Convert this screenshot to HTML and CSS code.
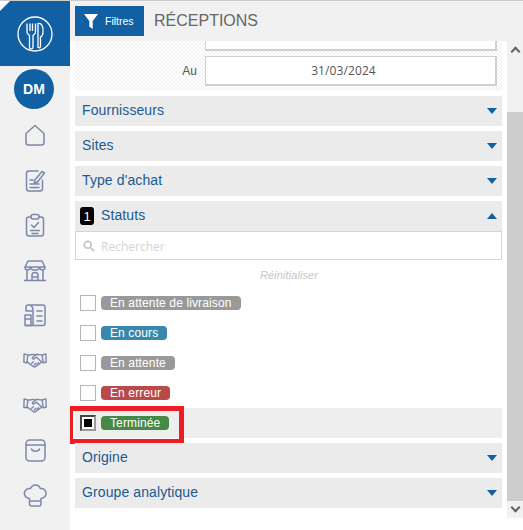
FILE: index.html
```html
<!DOCTYPE html>
<html lang="fr">
<head>
<meta charset="utf-8">
<title>Réceptions</title>
<link rel="stylesheet" href="styles.css">
</head>
<body>
<svg class="defs" aria-hidden="true">
  <symbol id="shake" viewBox="0 0 22 14">
    <g fill="none" stroke="currentColor" stroke-width="1.3" stroke-linejoin="round" stroke-linecap="round">
      <path d="M1 1.5l3.5.8-1 7.2L.8 9z"/>
      <path d="M21 1.5l-3.5.8 1 7.2 2.7-.5z"/>
      <path d="M4.5 2.5c2 .2 3.5-.8 5-.6l2 .6 1.5-.8c1.500.2 3 .8 4.500.7"/>
      <path d="M11.500 2.200L8.700 4.800c-.5 1 .8 1.600 1.700 1l2-1.400 5 4.600"/>
      <path d="M3.700 8.700l5.300 4c1 .8 2 .8 2.800.2l5-3.600"/>
      <path d="M8 10l1.500-1.500M10.300 11.500l1.500-1.500M13 11l1.300-1.500"/>
    </g>
  </symbol>
</svg>
<div class="app">
  <nav class="sidebar">
    <a class="logo">
      <svg class="logo-icon" viewBox="0 0 36 36" fill="none" stroke="#fff" stroke-width="1.300">
        <circle cx="18" cy="18" r="17"/>
        <path d="M10 7.500v8.500c0 2 1.500 2.500 2.500 3.500V31c0 2.500 3.500 2.500 3.500 0V19.500c1-1 2.500-1.500 2.500-3.500V7.500"/>
        <path d="M13 7.500V15M15.500 7.500V15"/>
        <path d="M21 32V7.500c3.500-1 5.500 3 5 9-.2 2.500-1 4-2.500 4.500V30c0 2.500-2.500 2.500-2.500 0"/>
      </svg>
    </a>
    <div class="avatar">DM</div>
    <ul class="nav-list">
      <li class="nav-item">
        <svg class="ico" viewBox="0 0 24 24"><path d="M3 10.500L12 2.500l9 8v9c0 1.500-1 2.500-2.500 2.500h-13C4 22 3 21 3 19.500z"/></svg>
      </li>
      <li class="nav-item">
        <svg class="ico" viewBox="0 0 24 24"><path d="M15 3H6c-1.500 0-2.500 1-2.500 2.500v15C3.500 22 4.500 23 6 23h11c1.500 0 2.500-1 2.500-2.500V12"/><path d="M11.500 12.500L19 3.500l2.500 1.500-7 9-3 .8zM7 12h3M7 16h9M7 19.500h9"/></svg>
      </li>
      <li class="nav-item">
        <svg class="ico" viewBox="0 0 24 24"><path d="M8 4H6C4.500 4 3.500 5 3.500 6.500v14C3.500 22 4.500 23 6 23h12c1.500 0 2.500-1 2.500-2.500v-14C20.500 5 19.500 4 18 4h-2"/><rect x="8" y="1.500" width="8" height="4.500" rx="2"/><path d="M8.500 12l2.500 2.500 4.500-5M7.500 17.500h9M9 20.500h6"/></svg>
      </li>
      <li class="nav-item">
        <svg class="ico" viewBox="0 0 24 24"><path d="M5 3h14l3 6c0 2-1 3-2.500 3S17 11 16.500 9.500C16 11 15 12 13.500 12h-3C9 12 8 11 7.500 9.500 7 11 6 12 4.500 12S2 11 2 9zM2 9h20M4 12v10M20 12v10M1.500 22.500h21"/><path d="M9 22v-5c0-3.500 6-3.500 6 0v5M9 19h6"/></svg>
      </li>
      <li class="nav-item">
        <svg class="ico" viewBox="0 0 24 24"><path d="M3 8V4c0-1.500 1-2 2-2h15c1 0 2 .7 2 2v16c0 1.500-1 2.500-2 2.500H3M3 8h6M6 8v0"/><path d="M8 3c2 .5 2 3.500 2 5v14"/><path d="M2 12h6v10.500H2zM2 16h6M14 8h5M14 13h5M14 18h5"/></svg>
      </li>
      <li class="nav-item">
        <svg class="ico-wide"><use href="#shake"/></svg>
      </li>
      <li class="nav-item">
        <svg class="ico-wide"><use href="#shake"/></svg>
      </li>
      <li class="nav-item">
        <svg class="ico" viewBox="0 0 24 24"><rect x="3" y="2" width="19" height="21" rx="3.500"/><path d="M3 7h19M8.500 11c1 3 7 3 8 0"/></svg>
      </li>
      <li class="nav-item">
        <svg class="ico" viewBox="0 0 24 24"><path d="M6.500 15.500C3 15 1 12.500 1.500 9.500 2 7 4.500 5 7.500 5.500 8.500 3 10.500 2 12.500 2s4 1.200 4.800 3.500c3-.5 5.200 1.500 5.700 4 .5 3-1.500 5.500-5 6V21c0 1-1 2-2 2H9c-1.500 0-2.500-1-2.500-2zM6.500 18h11"/></svg>
      </li>
      <li class="nav-item nav-item-cut">
        <svg class="ico" viewBox="0 0 24 24"><circle cx="12" cy="12" r="9"/></svg>
      </li>
    </ul>
  </nav>

  <main class="main">
    <header class="topbar">
      <button class="filter-btn">
        <svg class="funnel" viewBox="0 0 14 15"><path d="M0 0h14L8.700 7v8L5.300 12.500V7z"/></svg>
        <span>Filtres</span>
      </button>
      <h1 class="title">RÉCEPTIONS</h1>
    </header>

    <div class="body">
      <div class="panel">
        <div class="dates">
          <div class="date-row">
            <span class="date-label">Du</span>
            <div class="date-input">01/01/2024</div>
          </div>
          <div class="date-row">
            <span class="date-label">Au</span>
            <div class="date-input">31/03/2024</div>
          </div>
        </div>

        <section class="acc"><span class="acc-label">Fournisseurs</span><i class="caret"></i></section>
        <section class="acc"><span class="acc-label">Sites</span><i class="caret"></i></section>
        <section class="acc"><span class="acc-label">Type d'achat</span><i class="caret"></i></section>
        <section class="acc acc-open">
          <span class="count">1</span>
          <span class="acc-label">Statuts</span>
          <i class="caret caret-up"></i>
        </section>

        <div class="search">
          <svg class="search-ico" viewBox="0 0 14 14"><circle cx="5.500" cy="5.500" r="4"/><path d="M8.500 8.500L13 13"/></svg>
          <span>Rechercher</span>
        </div>
        <div class="reset">Réinitialiser</div>

        <ul class="statuses">
          <li class="status"><span class="check"></span><span class="tag tag-grey">En attente de livraison</span></li>
          <li class="status"><span class="check"></span><span class="tag tag-blue">En cours</span></li>
          <li class="status"><span class="check"></span><span class="tag tag-grey">En attente</span></li>
          <li class="status"><span class="check"></span><span class="tag tag-red">En erreur</span></li>
          <li class="status status-on"><span class="check check-on"></span><span class="tag tag-green">Terminée</span><span class="highlight"></span></li>
        </ul>

        <section class="acc acc-after"><span class="acc-label">Origine</span><i class="caret"></i></section>
        <section class="acc"><span class="acc-label">Groupe analytique</span><i class="caret"></i></section>
      </div>

      <div class="scrollbar">
        <div class="track-top"><i class="chev chev-up"></i></div>
        <div class="thumb"></div>
        <div class="track-end"><i class="chev chev-down"></i></div>
      </div>
    </div>
  </main>
</div>
</body>
</html>
```
FILE: styles.css
```css
* { box-sizing: border-box; }
html, body { margin: 0; padding: 0; height: 100%; overflow: hidden; background: #fff; }
body { font-family: "Liberation Sans", Arial, sans-serif; font-size: 14px; color: #333; }
.defs { width: 0; height: 0; position: absolute; }
ul { list-style: none; margin: 0; padding: 0; }

.app { display: flex; height: 530px; border-top: 1px solid #cdcdcd; }

/* Sidebar */
.sidebar { width: 70px; flex: none; background: #f1f1f1; display: flex; flex-direction: column; align-items: center; overflow: hidden; }
.logo { position: relative; width: 70px; height: 65px; flex: none; background: #1260a4; display: flex; align-items: center; justify-content: center; }
.logo::before { content: ""; position: absolute; left: 0; top: 0; border-style: solid; border-width: 10px 10px 0 0; border-color: #fff transparent transparent transparent; }
.logo-icon { width: 36px; height: 36px; }
.avatar { width: 40px; height: 40px; border-radius: 50%; background: #1260a4; color: #fff; font-weight: 700; font-size: 14px; display: flex; align-items: center; justify-content: center; margin: 3px 2px 0 0; flex: none; }
.nav-list { display: flex; flex-direction: column; align-items: center; margin: 3px 1px 0 0; }
.nav-item { height: 45px; width: 69px; display: flex; align-items: center; justify-content: center; color: #7d87ab; }
.nav-item-cut { color: #ccc; }
.ico { width: 24px; height: 24px; fill: none; stroke: currentColor; stroke-width: 1.500; stroke-linejoin: round; stroke-linecap: round; }
.ico-wide { width: 24px; height: 16px; color: #7d87ab; }

/* Main */
.main { flex: 1; min-width: 0; display: flex; flex-direction: column; }
.topbar { height: 40px; flex: none; background: #f1f1f1; display: flex; align-items: flex-start; padding: 5px 0 0 5px; }
.filter-btn { width: 69px; height: 30px; border: 0; padding: 0 0 0 9px; background: #1260a4; color: #fff; display: flex; align-items: center; gap: 7px; font: 10.500px "Liberation Sans", Arial, sans-serif; }
.funnel { width: 14px; height: 15px; fill: #fff; }
.title { margin: 0 0 0 10px; font-size: 16px; line-height: 30px; font-weight: 400; color: #666; }

.body { flex: 1; min-height: 0; display: flex; }
.panel { width: 437px; padding-left: 5px; flex: none; overflow: hidden; }

.dates { height: 50px; width: 427px; padding-right: 5px; margin-bottom: 5px; display: flex; flex-direction: column; justify-content: flex-end; gap: 5px; overflow: hidden; background-color: #fff; background-image: repeating-conic-gradient(#f3f3f3 0 25%, #fff 0 50%); background-size: 4px 4px; }
.date-row { flex: none; display: flex; align-items: center; }
.date-row:last-child { margin-bottom: 5px; }
.date-label { width: 130px; padding-right: 8px; text-align: right; font-size: 12px; color: #555; }
.date-input { flex: 1; height: 30px; background: #fff; border: 1px solid #cfcfcf; border-width: 1px 2px 2px 1px; display: flex; align-items: center; justify-content: center; padding-right: 14px; font-family: "Open Sans", sans-serif; font-size: 12px; letter-spacing: .1px; color: #555; }

.acc { position: relative; width: 427px; height: 30px; background: #ebebeb; margin-bottom: 5px; display: flex; align-items: center; padding: 0 0 2px 7px; }
.acc-label { color: #1b5a93; font-size: 14px; letter-spacing: .1px; }
.acc-open { margin-bottom: 0; }
.count { width: 14px; height: 18px; border-radius: 3px; background: #000; color: #fff; font-size: 13px; display: flex; align-items: center; justify-content: center; margin: 2px 7px 0 -2px; }
.caret { position: absolute; right: 5px; top: 12px; width: 0; height: 0; border-style: solid; border-width: 6px 5px 0 5px; border-color: #1260a4 transparent transparent transparent; }
.caret-up { border-width: 0 5px 6px 5px; border-color: transparent transparent #1260a4 transparent; }

.search { width: 427px; height: 29px; background: #fff; border: 1px solid #d5d5d5; display: flex; align-items: center; padding: 1px 0 0 7px; gap: 6px; color: #d4d4d4; font-family: "Open Sans", sans-serif; font-size: 12px; }
.search-ico { width: 12px; height: 12px; fill: none; stroke: #c4c4c4; stroke-width: 2; }
.reset { height: 28px; width: 427px; display: flex; align-items: center; justify-content: center; padding: 2px 0 0 1px; color: #c6c6c6; font-size: 11px; font-style: italic; letter-spacing: .1px; }
.statuses { width: 427px; }
.status { height: 30px; display: flex; align-items: center; padding-left: 5px; gap: 5px; position: relative; }
.status-on { background: #eee; }
.check { width: 16px; height: 16px; background: #fff; border: 1px solid #b5b5b5; flex: none; }
.check-on { border: 2px solid; border-color: #444 #9a9a9a #9a9a9a #444; display: flex; align-items: center; justify-content: center; }
.check-on::after { content: ""; width: 8px; height: 8px; background: #000; }
.tag { height: 14px; border-radius: 4px; padding: 0 9px; color: #fff; font-size: 12px; line-height: 14px; letter-spacing: .12px; white-space: nowrap; }
.tag-grey { background: #999; }
.tag-blue { background: #3a87ad; }
.tag-red { background: #b94a48; }
.tag-green { background: #468847; }
.highlight { position: absolute; left: -7px; top: -2px; width: 116px; height: 38px; border: 5px solid #ee1c25; pointer-events: none; }
.acc-after { margin-top: 5px; }

.scrollbar { width: 16px; flex: none; height: 477px; display: flex; flex-direction: column; background: #f1f1f1; }
.track-top { height: 71px; flex: none; padding-top: 5px; display: flex; justify-content: center; }
.thumb { flex: 1; background: #cdcdcd; }
.track-end { height: 17px; flex: none; display: flex; justify-content: center; padding-top: 4px; }
.chev { width: 7px; height: 7px; border: solid #616161; border-width: 2px 0 0 2px; transform: rotate(45deg); margin-top: 2px; }
.chev-down { transform: rotate(225deg); margin-top: -1px; }
```
